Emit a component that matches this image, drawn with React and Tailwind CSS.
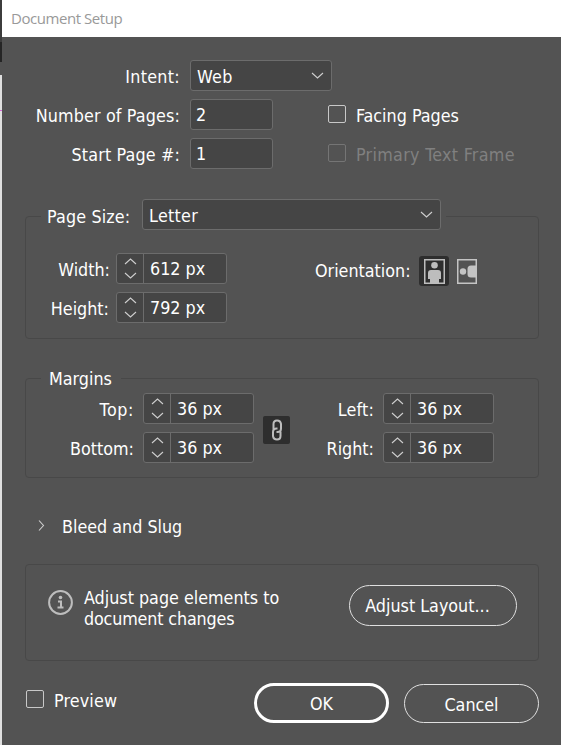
import React from "react";

function Chevron({ className, d = "M1 1l5.5 5L12 1", w = 13, h = 7 }) {
  return (
    <svg className={className} width={w} height={h} viewBox={`0 0 ${w} ${h}`} fill="none" stroke="#cfcfcf" strokeWidth="1.1">
      <path d={d} />
    </svg>
  );
}

function Select({ className, children }) {
  return (
    <div className={`flex h-[31px] items-center justify-between rounded-[3px] border border-[#6c6c6c] bg-[#454545] pr-[7px] pl-[6px] ${className}`}>
      <span className="pt-[3px] tracking-[0.3px]">{children}</span>
      <Chevron className="-mt-px" />
    </div>
  );
}

function Input({ children }) {
  return (
    <div className="flex h-[31px] w-[83px] items-center rounded-[3px] border border-[#6c6c6c] bg-[#454545] pt-px pl-[5px]">{children}</div>
  );
}

function Stepper({ children }) {
  return (
    <div className="flex h-[31px] w-[111px] rounded-[3px] border border-[#6c6c6c] bg-[#454545]">
      <div className="flex w-[27px] flex-col items-center justify-between border-r border-[#6c6c6c] py-1">
        <Chevron d="M1 6l5.5-5L12 6" />
        <Chevron />
      </div>
      <span className="flex items-center pt-px pl-[6px]">{children}</span>
    </div>
  );
}

function Check({ disabled, className = "" }) {
  return (
    <span className={`size-[18px] shrink-0 rounded-[2px] border ${disabled ? "border-[#757575]" : "border-[#c8c8c8]"} ${className}`} />
  );
}

function Label({ className, children }) {
  return <span className={`pt-[3px] text-right whitespace-nowrap ${className}`}>{children}</span>;
}

export default function App() {
  return (
    <div className="flex h-[745px] w-[561px] overflow-hidden bg-[#535353] font-['DejaVu_Sans_Condensed','DejaVu_Sans',sans-serif] text-[17.75px] leading-[21px] text-white">
      <div className="flex w-[2px] shrink-0 flex-col bg-[#e0e0e0]">
        <div className="h-[42px] bg-[#3c3c3c]" />
        <div className="h-[20px] bg-[#252525]" />
        <div className="h-[13px] bg-[#535353]" />
        <div className="mt-[35px] h-px bg-[#d468d8]" />
      </div>
      <main className="flex w-[559px] flex-col">
        <header className="flex h-[37px] items-center bg-white pl-[9px] font-['Open_Sans',sans-serif] text-[15px] text-[#999999]">
          <span className="tracking-[-0.45px]">Document Setup</span>
        </header>

        <section className="mt-[23px] flex flex-col gap-2">
          <div className="flex h-[31px] items-center">
            <Label className="mr-[10px] w-[178px] tracking-[0.3px]">Intent:</Label>
            <Select className="w-[142px]">Web</Select>
          </div>
          <div className="flex h-[31px] items-center">
            <Label className="mr-[10px] w-[178px] tracking-[0.15px]">Number of Pages:</Label>
            <Input>2</Input>
            <div className="ml-[55px] flex items-center gap-[10px]">
              <Check className="-mt-[2px]" />
              <span className="pt-[3px]">Facing Pages</span>
            </div>
          </div>
          <div className="flex h-[31px] items-center">
            <Label className="mr-[10px] w-[178px] tracking-[0.15px]">Start Page #:</Label>
            <Input>1</Input>
            <div className="ml-[55px] flex items-center gap-[10px] text-[#808080]">
              <Check disabled className="-mt-[2px]" />
              <span className="pt-[3px] tracking-[0.3px]">Primary Text Frame</span>
            </div>
          </div>
        </section>

        <fieldset className="mt-[30px] ml-[23px] h-[140px] w-[514px] rounded-[4px] border border-[#484848]">
          <legend className="ml-[15px] flex h-[35px] w-[405px] items-start pl-[6px]">
            <span className="mt-[8px] w-[95px] tracking-[0.15px] whitespace-nowrap">Page Size:</span>
            <Select className="w-[299px]">Letter</Select>
          </legend>
          <div className="mt-[19px] flex">
            <div className="flex flex-col gap-2">
              <div className="flex items-center">
                <Label className="mr-[6px] w-[84px]">Width:</Label>
                <Stepper>612 px</Stepper>
              </div>
              <div className="flex items-center">
                <Label className="mr-[7px] w-[83px]">Height:</Label>
                <Stepper>792 px</Stepper>
              </div>
            </div>
            <div className="mt-[3px] ml-[88px] flex h-[30px] items-center">
              <span className="w-[104px] whitespace-nowrap">Orientation:</span>
              <span className="flex size-[30px] items-center justify-center rounded-[3px] bg-[#2e2e2e]">
                <svg width="21" height="25" viewBox="0 0 21 25">
                  <rect x=".75" y=".75" width="19.5" height="23.5" fill="none" stroke="#bdbdbd" strokeWidth="1.5" />
                  <circle cx="10.5" cy="6.3" r="3.3" fill="#bdbdbd" />
                  <path d="M7 11h7q3 0 3 3v6h-2v4H6v-4H4v-6q0-3 3-3z" fill="#bdbdbd" />
                </svg>
              </span>
              <svg className="ml-2" width="20" height="25" viewBox="0 0 20 25">
                <rect x=".75" y=".75" width="18.5" height="23.5" fill="none" stroke="#c4c4c4" strokeWidth="1.5" />
                <circle cx="6" cy="12.5" r="3.2" fill="#c4c4c4" />
                <path d="M19 6.5h-5q-3.500 0-3.500 3.500v5q0 3.500 3.500 3.500h5z" fill="#c4c4c4" />
              </svg>
            </div>
          </div>
        </fieldset>

        <fieldset className="mt-[27px] ml-[23px] h-[112px] w-[514px] rounded-[4px] border border-[#484848]">
          <legend className="ml-[15px] flex h-[24px] w-[80px] items-center pt-[3px] pl-2">Margins</legend>
          <div className="mt-[3px] flex">
            <div className="flex flex-col gap-2">
              <div className="flex items-center">
                <Label className="mr-[9px] w-[108px] tracking-[0.6px]">Top:</Label>
                <Stepper>36 px</Stepper>
              </div>
              <div className="flex items-center">
                <Label className="mr-[9px] w-[108px]">Bottom:</Label>
                <Stepper>36 px</Stepper>
              </div>
            </div>
            <div className="mt-[23px] ml-[9px] flex h-[28px] w-[27px] items-center justify-center rounded-[2px] bg-[#2e2e2e]">
              <svg width="12" height="22" viewBox="0 0 12 22" fill="none" stroke="#bdbdbd" strokeWidth="2">
                <path d="M2.500 10.500V5Q2.500 1.500 6 1.500T10 5v4.500Q10 13 6.500 13H5.500" />
                <path d="M9.500 12.500V17Q9.500 20.500 6 20.500T2 17v-4Q2 9.500 5.500 9.500H6.500" />
              </svg>
            </div>
            <div className="flex flex-col gap-2">
              <div className="flex items-center">
                <Label className="mr-[9px] w-[84px] tracking-[0.2px]">Left:</Label>
                <Stepper>36 px</Stepper>
              </div>
              <div className="flex items-center">
                <Label className="mr-[9px] w-[84px]">Right:</Label>
                <Stepper>36 px</Stepper>
              </div>
            </div>
          </div>
        </fieldset>

        <div className="mt-[38px] flex h-[21px] items-center pl-[36px]">
          <Chevron w={7} h={13} d="M1 1.500l4.500 5-4.500 5" className="-mt-[2px]" />
          <span className="mt-px ml-[17px]">Bleed and Slug</span>
        </div>

        <section className="mt-[27px] ml-[23px] flex h-[97px] w-[514px] items-start rounded-[4px] border border-[#484848]">
          <svg className="mt-[25px] ml-[22px]" width="25" height="25" viewBox="0 0 25 25" fill="none" stroke="#bdbdbd">
            <circle cx="12.500" cy="12.500" r="11.400" strokeWidth="2" />
            <circle cx="12.500" cy="7.500" r="1.800" fill="#bdbdbd" stroke="none" />
            <path d="M10 11.500h3v6M9.500 17.500h6" strokeWidth="2" />
          </svg>
          <p className="mt-[23px] ml-[11px] w-[265px]">
            Adjust page elements to
            <br />
            <span className="tracking-[-0.15px]">document changes</span>
          </p>
          <button className="mt-[20px] h-[41px] w-[168px] rounded-full border border-[#e0e0e0] pt-px pr-[11px]">Adjust Layout...</button>
        </section>

        <footer className="mt-[22px] flex pl-[24px]">
          <div className="mt-[7px] flex h-[18px] w-[228px] items-center gap-[10px]">
            <Check />
            <span className="mt-[4px] tracking-[0.15px]">Preview</span>
          </div>
          <button className="h-[40px] w-[135px] rounded-full border-[3px] border-white pt-[3px]">OK</button>
          <button className="mt-px ml-[15px] h-[39px] w-[135px] rounded-full border border-[#e0e0e0] pt-[3px]">Cancel</button>
        </footer>
      </main>
    </div>
  );
}
